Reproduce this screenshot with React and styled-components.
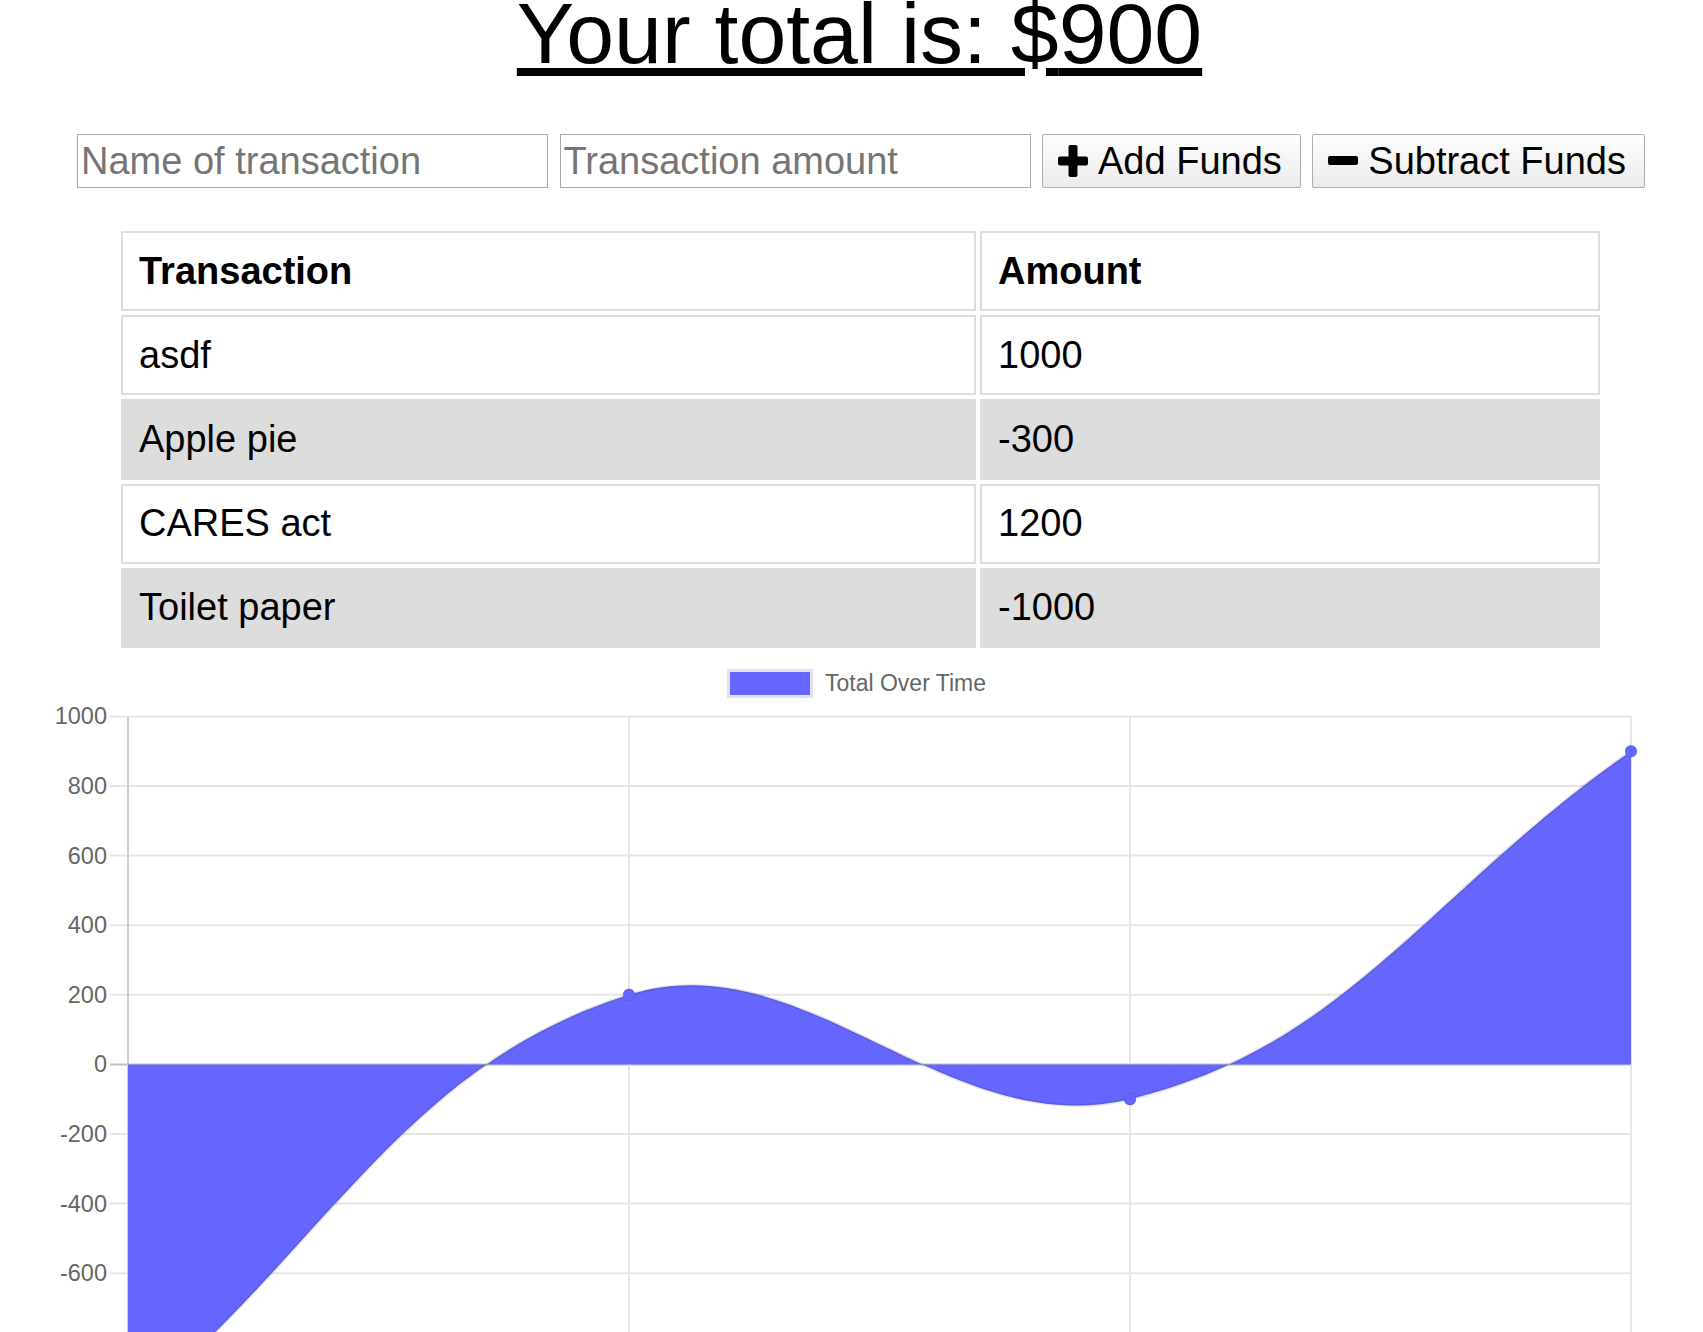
import React from "react";
import styled, { createGlobalStyle } from "styled-components";

const GlobalStyle = createGlobalStyle`
  html, body {
    margin: 0;
    padding: 0;
    background: #fff;
    overflow: hidden;
  }
  body {
    font-family: "Liberation Sans", Arial, sans-serif;
    color: #000;
  }
`;

const Page = styled.div`
  width: 1703px;
`;

const Title = styled.h1`
  margin: -16px 0 0;
  padding-left: 16px;
  text-align: center;
  font-size: 86px;
  font-weight: normal;
  line-height: normal;
  text-decoration: underline;
  text-decoration-thickness: 8px;
  text-underline-offset: 5px;
`;

const Form = styled.form`
  display: flex;
  align-items: center;
  gap: 11.5px;
  margin-top: 51px;
  padding-left: 77px;
`;

const Input = styled.input`
  box-sizing: border-box;
  width: 471px;
  height: 54px;
  padding: 4px 3px;
  border: 1px solid #a9a9a9;
  border-radius: 0;
  font: 38px "Liberation Sans", Arial, sans-serif;
  color: #000;
  outline: none;
  &::placeholder {
    color: #757575;
  }
`;

const Button = styled.button`
  box-sizing: border-box;
  height: 54px;
  display: flex;
  align-items: center;
  gap: 10px;
  padding: 0 18px 0 15px;
  border: 1px solid #adadad;
  border-radius: 2px;
  background: linear-gradient(#fdfdfd, #ececec);
  font: 38px "Liberation Sans", Arial, sans-serif;
  color: #000;
  cursor: pointer;
`;

const Icon = styled.svg`
  flex: none;
  display: block;
`;

const Table = styled.table`
  margin: 39px 0 0 117px;
  width: 1487px;
  border-collapse: separate;
  border-spacing: 4.7px;
`;

const Cell = styled.td`
  border: 2px solid #dddddd;
  padding: 16.6px 16px;
  font-size: 38px;
  line-height: normal;
  font-weight: ${(p) => (p.$head ? 700 : 400)};
  text-align: left;
  background: ${(p) => (p.$shade ? "#dddddd" : "#ffffff")};
  width: ${(p) => (p.$w ? `${p.$w}px` : "auto")};
`;

const ChartSvg = styled.svg`
  display: block;
  font-family: "Liberation Sans", Arial, sans-serif;
`;

const TickLabel = styled.text`
  fill: #666;
  font-size: 23.5px;
`;

const LegendLabel = styled.text`
  fill: #666;
  font-size: 23px;
`;

const PlusIcon = () => (
  <Icon width="30" height="32" viewBox="0 0 30 32">
    <rect x="10.5" y="0" width="9" height="32" rx="2" fill="#000" />
    <rect x="0" y="11.5" width="30" height="9" rx="2" fill="#000" />
  </Icon>
);

const MinusIcon = () => (
  <Icon width="30" height="32" viewBox="0 0 30 32">
    <rect x="0" y="11" width="30" height="9" rx="2" fill="#000" />
  </Icon>
);

const transactions = [
  { name: "asdf", value: 1000 },
  { name: "Apple pie", value: -300 },
  { name: "CARES act", value: 1200 },
  { name: "Toilet paper", value: -1000 },
];

// chart geometry, in px relative to the top of the svg (page y 651)
const TOP = 651;
const Y0 = 1063.4 - TOP;
const UNIT = 0.348;
const LEFT = 128;
const RIGHT = 1631;
const yOf = (v) => Y0 - v * UNIT;

function splinePoints(pts, t = 0.4) {
  return pts.map((cur, i) => {
    const prev = pts[i - 1] || cur;
    const next = pts[i + 1] || cur;
    const d01 = Math.hypot(cur.x - prev.x, cur.y - prev.y);
    const d12 = Math.hypot(next.x - cur.x, next.y - cur.y);
    let s01 = d01 / (d01 + d12);
    let s12 = d12 / (d01 + d12);
    if (isNaN(s01)) s01 = 0;
    if (isNaN(s12)) s12 = 0;
    const fa = t * s01;
    const fb = t * s12;
    return {
      a: { x: cur.x - fa * (next.x - prev.x), y: cur.y - fa * (next.y - prev.y) },
      b: { x: cur.x + fb * (next.x - prev.x), y: cur.y + fb * (next.y - prev.y) },
    };
  });
}

const Chart = ({ items }) => {
  // oldest first, running total
  let run = 0;
  const totals = [...items].reverse().map((t) => (run += t.value));
  const step = (RIGHT - LEFT) / (totals.length - 1);
  const pts = totals.map((v, i) => ({ x: LEFT + step * i, y: yOf(v) }));
  const cps = splinePoints(pts);

  let line = `M${pts[0].x},${pts[0].y}`;
  for (let i = 1; i < pts.length; i++) {
    const c1 = cps[i - 1].b;
    const c2 = cps[i].a;
    line += ` C${c1.x},${c1.y} ${c2.x},${c2.y} ${pts[i].x},${pts[i].y}`;
  }
  const area = `${line} L${RIGHT},${Y0} L${LEFT},${Y0} Z`;

  const ticks = [];
  for (let v = 1000; v >= -1000; v -= 200) ticks.push(v);
  const bottom = yOf(-1000);

  return (
    <ChartSvg width="1703" height="840" viewBox="0 0 1703 840">
      <rect x="728.5" y={669.5 - TOP} width="83" height="26" fill="#6666ff" stroke="#e1e1f3" strokeWidth="3" />
      <LegendLabel x="825" y={690 - TOP}>Total Over Time</LegendLabel>

      {ticks.map((v) => (
        <g key={v}>
          <line
            x1="110"
            x2={RIGHT}
            y1={yOf(v)}
            y2={yOf(v)}
            stroke={v === 0 ? "#c0c0c0" : "#e6e6e6"}
            strokeWidth="2"
          />
          <TickLabel x="107" y={yOf(v) + 8} textAnchor="end">
            {v}
          </TickLabel>
        </g>
      ))}

      {pts.map((p, i) => (
        <line
          key={i}
          x1={p.x}
          x2={p.x}
          y1={yOf(1000)}
          y2={bottom + 18}
          stroke={i === 0 ? "#cfcfcf" : "#e6e6e6"}
          strokeWidth="2"
        />
      ))}

      <path d={area} fill="#6666ff" />
      <path d={line} fill="none" stroke="rgba(0,0,0,0.1)" strokeWidth="3" />
      {pts.map((p, i) => (
        <circle key={i} cx={p.x} cy={p.y} r="6" fill="#6666ff" stroke="rgba(0,0,0,0.1)" strokeWidth="1" />
      ))}
    </ChartSvg>
  );
};

const App = () => {
  const total = transactions.reduce((s, t) => s + t.value, 0);

  return (
    <Page>
      <GlobalStyle />
      <Title>Your total is: ${total}</Title>

      <Form onSubmit={(e) => e.preventDefault()}>
        <Input name="name" placeholder="Name of transaction" />
        <Input name="amount" type="number" placeholder="Transaction amount" />
        <Button type="button">
          <PlusIcon />
          Add Funds
        </Button>
        <Button type="button">
          <MinusIcon />
          Subtract Funds
        </Button>
      </Form>

      <Table>
        <thead>
          <tr>
            <Cell as="th" $head $w={819}>Transaction</Cell>
            <Cell as="th" $head>Amount</Cell>
          </tr>
        </thead>
        <tbody>
          {transactions.map((t, i) => (
            <tr key={t.name}>
              <Cell $shade={i % 2 === 1}>{t.name}</Cell>
              <Cell $shade={i % 2 === 1}>{t.value}</Cell>
            </tr>
          ))}
        </tbody>
      </Table>

      <Chart items={transactions} />
    </Page>
  );
};

export default App;
